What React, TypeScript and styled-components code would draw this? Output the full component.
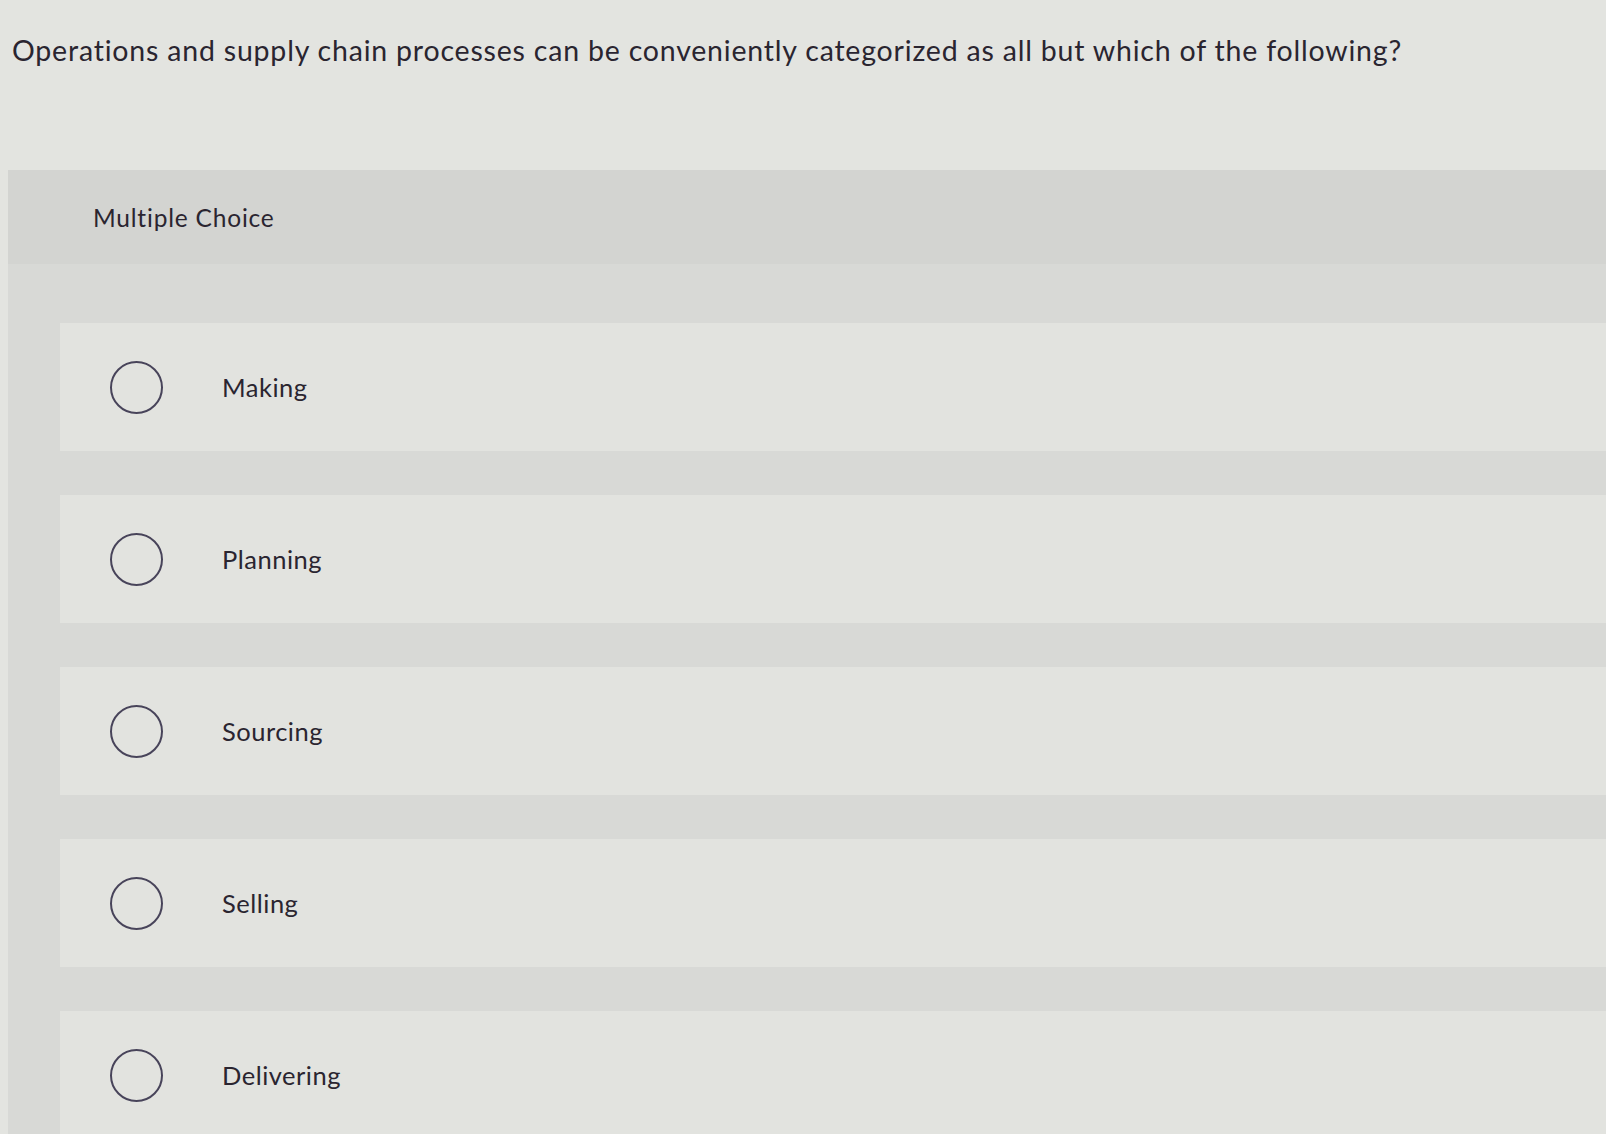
import React from 'react'
import styled, { createGlobalStyle } from 'styled-components'

const GlobalStyle = createGlobalStyle`
  html, body {
    margin: 0;
    padding: 0;
    background: #e3e4e0;
    overflow: hidden;
  }
`

const StyledPage = styled.div`
  width: 1606px;
  height: 1134px;
  overflow: hidden;
  font-family: Lato, "Open Sans", sans-serif;
  color: #2a2530;
`

const StyledQuestion = styled.div`
  padding: 33px 0 0 12px;
  font-size: 28.5px;
  line-height: 35px;
  letter-spacing: 0.8px;
`

const StyledPanel = styled.div`
  margin: 102px 0 0 8px;
  background: #d8d9d6;
`

const StyledPanelHeader = styled.div`
  height: 94px;
  padding-left: 85px;
  display: flex;
  align-items: center;
  background: #d3d4d1;
  font-size: 24.5px;
  letter-spacing: 0.8px;
`

const StyledChoices = styled.div`
  padding: 59px 0 40px 52px;
  display: flex;
  flex-direction: column;
  gap: 44px;
`

const StyledChoice = styled.label`
  height: 128px;
  display: flex;
  align-items: center;
  background: #e2e3df;
  cursor: pointer;
`

const StyledRadio = styled.span`
  width: 49px;
  height: 49px;
  margin-left: 50px;
  margin-right: 59px;
  border: 2px solid #48445a;
  border-radius: 50%;
  flex-shrink: 0;
`

const StyledChoiceText = styled.span`
  font-size: 25.5px;
  letter-spacing: 0.5px;
`

const choices = ['Making', 'Planning', 'Sourcing', 'Selling', 'Delivering']

export default function App() {
  return (
    <StyledPage>
      <GlobalStyle />
      <StyledQuestion>
        Operations and supply chain processes can be conveniently categorized as all but which of the following?
      </StyledQuestion>
      <StyledPanel>
        <StyledPanelHeader>Multiple Choice</StyledPanelHeader>
        <StyledChoices>
          {choices.map((c) => (
            <StyledChoice key={c}>
              <StyledRadio />
              <StyledChoiceText>{c}</StyledChoiceText>
            </StyledChoice>
          ))}
        </StyledChoices>
      </StyledPanel>
    </StyledPage>
  )
}
